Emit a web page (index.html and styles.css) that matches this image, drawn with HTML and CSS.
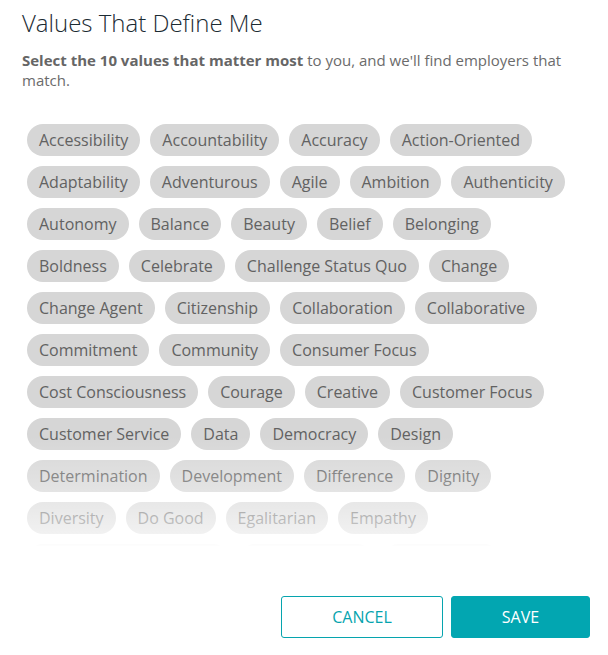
FILE: index.html
```html
<!DOCTYPE html>
<html lang="en">
<head>
<meta charset="utf-8">
<title>Values That Define Me</title>
<link rel="stylesheet" href="styles.css">
</head>
<body>
<div class="dialog">
  <header class="head">
    <h1 class="title">Values That Define Me</h1>
    <p class="lead"><strong>Select the 10 values that matter most</strong> to you, and we'll find employers that match.</p>
  </header>
  <div class="chips-wrap">
    <div class="chips">
      <span class="chip">Accessibility</span>
      <span class="chip">Accountability</span>
      <span class="chip">Accuracy</span>
      <span class="chip">Action-Oriented</span>
      <span class="chip">Adaptability</span>
      <span class="chip">Adventurous</span>
      <span class="chip">Agile</span>
      <span class="chip">Ambition</span>
      <span class="chip">Authenticity</span>
      <span class="chip">Autonomy</span>
      <span class="chip">Balance</span>
      <span class="chip">Beauty</span>
      <span class="chip">Belief</span>
      <span class="chip">Belonging</span>
      <span class="chip">Boldness</span>
      <span class="chip">Celebrate</span>
      <span class="chip">Challenge Status Quo</span>
      <span class="chip">Change</span>
      <span class="chip">Change Agent</span>
      <span class="chip">Citizenship</span>
      <span class="chip">Collaboration</span>
      <span class="chip">Collaborative</span>
      <span class="chip">Commitment</span>
      <span class="chip">Community</span>
      <span class="chip">Consumer Focus</span>
      <span class="chip">Cost Consciousness</span>
      <span class="chip">Courage</span>
      <span class="chip">Creative</span>
      <span class="chip">Customer Focus</span>
      <span class="chip">Customer Service</span>
      <span class="chip">Data</span>
      <span class="chip">Democracy</span>
      <span class="chip">Design</span>
      <span class="chip">Determination</span>
      <span class="chip">Development</span>
      <span class="chip">Difference</span>
      <span class="chip">Dignity</span>
      <span class="chip">Diversity</span>
      <span class="chip">Do Good</span>
      <span class="chip">Egalitarian</span>
      <span class="chip">Empathy</span>
      <span class="chip">Employee Development</span>
      <span class="chip">Empowerment</span>
      <span class="chip">Engagement</span>
      <span class="chip">Entrepreneurial</span>
      <span class="chip">Equality</span>
    </div>
  </div>
  <footer class="actions">
    <button class="btn btn-outline" type="button">CANCEL</button>
    <button class="btn btn-primary" type="button">SAVE</button>
  </footer>
</div>
</body>
</html>
```

FILE: styles.css
```css
html, body {
  margin: 0;
  padding: 0;
  background: #ffffff;
}

body {
  font-family: "Open Sans", "Liberation Sans", sans-serif;
  width: 608px;
  height: 655px;
  overflow: hidden;
}

.dialog {
  display: flex;
  flex-direction: column;
  padding: 7px 18px 0 22px;
}

.title {
  margin: 0;
  font-size: 24px;
  line-height: 32px;
  font-weight: 300;
  color: #1c2b33;
}

.lead {
  margin: 11px 0 0;
  font-size: 15px;
  line-height: 20px;
  color: #6b6b6b;
}

.lead strong {
  font-weight: 700;
  color: #666666;
}

.chips-wrap {
  position: relative;
  margin-top: 29px;
  height: 427px;
  overflow: hidden;
  margin-right: 4px;
}

.chips-wrap::after {
  content: "";
  position: absolute;
  left: 0;
  right: 0;
  bottom: 0;
  height: 110px;
  background: linear-gradient(to bottom, rgba(255,255,255,0) 0%, rgba(255,255,255,0.3) 45%, rgba(255,255,255,0.66) 88%, rgba(255,255,255,0.96) 100%);
  pointer-events: none;
}

.chips {
  display: flex;
  flex-wrap: wrap;
  gap: 10px 10px;
  padding: 5px;
}

.chip {
  display: inline-block;
  height: 32px;
  line-height: 32px;
  padding: 0 12px;
  border-radius: 16px;
  background: #d6d6d6;
  color: #626262;
  font-size: 16px;
  white-space: nowrap;
}

.actions {
  display: flex;
  justify-content: flex-end;
  gap: 8px;
  margin-top: 50px;
}

.btn {
  height: 42px;
  border-radius: 3px;
  font-family: "Open Sans", "Liberation Sans", sans-serif;
  font-size: 16px;
  padding: 0;
  cursor: pointer;
}

.btn-outline {
  width: 162px;
  background: #ffffff;
  border: 1px solid #06a4ae;
  color: #06a4ae;
}

.btn-primary {
  width: 139px;
  background: #02a6b1;
  border: 1px solid #02a6b1;
  color: #ffffff;
}
```
